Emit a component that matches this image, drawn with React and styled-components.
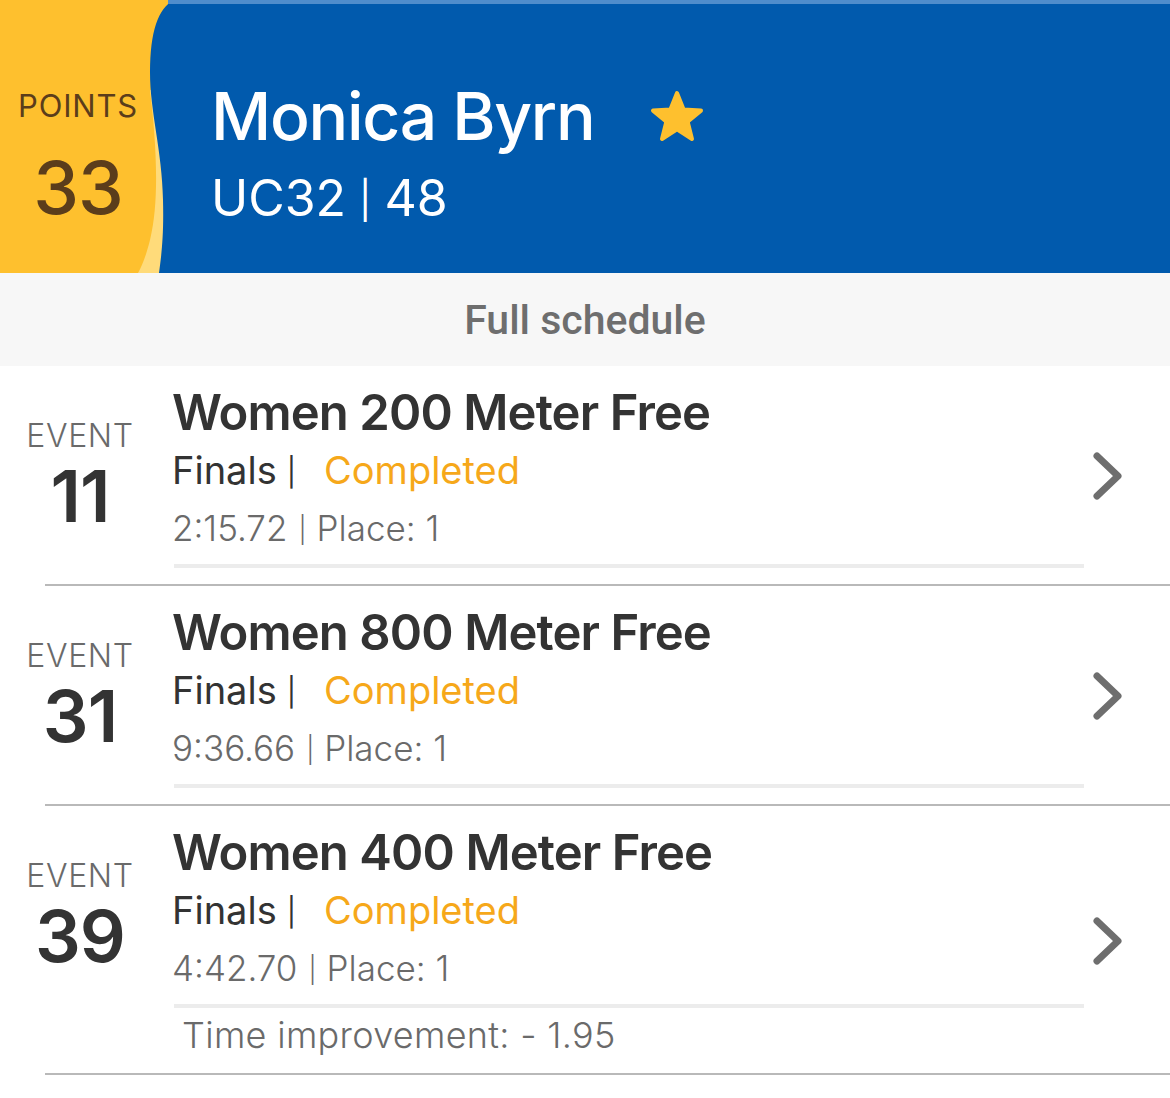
import React from "react";
import styled, { createGlobalStyle } from "styled-components";

const Global = createGlobalStyle`
  html, body { margin: 0; padding: 0; background: #ffffff; }
  body { font-family: "Inter", "Lato", sans-serif; -webkit-font-smoothing: antialiased; }
  * { box-sizing: border-box; }
`;

const Page = styled.div`
  width: 1170px;
  min-height: 1098px;
  background: #ffffff;
  overflow: hidden;
`;

const Header = styled.header`
  position: relative;
  display: flex;
  align-items: stretch;
  height: 273px;
  background: #fec02e;
`;

const Wave = styled.svg`
  position: absolute;
  inset: 0;
  width: 100%;
  height: 100%;
  display: block;
`;

const PointsBox = styled.div`
  position: relative;
  width: 156px;
  display: flex;
  flex-direction: column;
  align-items: center;
  padding-top: 88px;
  color: #5b3d1b;
`;

const PointsLabel = styled.div`
  font-size: 31px;
  line-height: 36px;
  font-weight: 400;
  letter-spacing: 0.8px;
`;

const PointsValue = styled.div`
  font-size: 73px;
  line-height: 80px;
  font-weight: 500;
  margin-top: 24px;
  letter-spacing: -1px;
`;

const Athlete = styled.div`
  position: relative;
  display: flex;
  flex-direction: column;
  padding-left: 55px;
  padding-top: 76px;
  color: #ffffff;
`;

const NameRow = styled.div`
  display: flex;
  align-items: center;
  gap: 55px;
`;

const Name = styled.h1`
  margin: 0;
  font-size: 66px;
  line-height: 80px;
  font-weight: 500;
  letter-spacing: -1.3px;
`;

const Sub = styled.div`
  font-size: 50px;
  line-height: 60px;
  font-weight: 400;
  margin-top: 12px;
`;

const Pipe = styled.span`
  font-size: 0.74em;
  vertical-align: ${(p) => p.$lift || "2px"};
  margin: 0 ${(p) => p.$right || p.$left || "12px"} 0 ${(p) => p.$left || "12px"};
`;

const ScheduleBar = styled.div`
  height: 93px;
  background: #f7f7f7;
  display: flex;
  align-items: center;
  justify-content: center;
  font-family: "Roboto", "Liberation Sans", sans-serif;
  font-weight: 500;
  font-size: 41px;
  color: #6e6e6e;
  padding-top: 1px;
`;

const List = styled.div`
  display: flex;
  flex-direction: column;
`;

const Row = styled.div`
  display: flex;
  align-items: center;
  padding: 18px 0 16px;
`;

const Main = styled.div`
  flex: 0 0 1084px;
  display: flex;
  flex-direction: column;
`;

const Top = styled.div`
  display: flex;
  align-items: center;
`;

const EventCol = styled.div`
  flex: 0 0 172px;
  padding-right: 12px;
  display: flex;
  flex-direction: column;
  align-items: center;
`;

const EventLabel = styled.div`
  font-size: 32px;
  line-height: 36px;
  font-weight: 300;
  color: #6a6a6a;
  letter-spacing: 0.6px;
`;

const EventNum = styled.div`
  font-size: 72px;
  line-height: 76px;
  font-weight: 600;
  color: #333333;
  margin-top: 4px;
  letter-spacing: -1px;
`;

const Info = styled.div`
  flex: 1;
  display: flex;
  flex-direction: column;
`;

const Title = styled.div`
  font-size: 49px;
  line-height: 58px;
  font-weight: 600;
  color: #333333;
  letter-spacing: -0.9px;
`;

const Meta = styled.div`
  font-size: 38px;
  line-height: 56px;
  font-weight: 400;
  color: #333333;
`;

const Status = styled.span`
  color: #f6a81a;
`;

const Result = styled.div`
  font-size: 35px;
  line-height: 56px;
  font-weight: 300;
  color: #6a6a6a;
`;

const Rule = styled.div`
  height: 4px;
  background: #ececec;
  margin-top: 6px;
  margin-left: 2px;
`;

const Footer = styled.div`
  padding: 5px 0 0 182px;
  font-size: 36px;
  line-height: 44px;
  font-weight: 300;
  color: #6a6a6a;
  letter-spacing: 0.3px;
`;

const ChevronCell = styled.div`
  flex: 1;
  display: flex;
  align-items: center;
  padding-left: 9px;
`;

const Separator = styled.div`
  height: 2px;
  background: #b9b9b9;
  margin-left: 45px;
`;

const Star = () => (
  <svg width="56" height="52" viewBox="0 0 56 52" aria-hidden="true">
    <path
      d="M28 3 L34.6 19.6 L52 20.6 L38.6 31.6 L43 49 L28 39.3 L13 49 L17.4 31.6 L4 20.6 L21.4 19.6 Z"
      fill="#fec02e"
      stroke="#fec02e"
      strokeWidth="4"
      strokeLinejoin="round"
    />
  </svg>
);

const Chevron = () => (
  <svg width="30" height="48" viewBox="0 0 30 48" aria-hidden="true">
    <polyline
      points="4,4 25,24 4,44"
      fill="none"
      stroke="#6e6e6e"
      strokeWidth="7"
      strokeLinecap="round"
      strokeLinejoin="round"
    />
  </svg>
);

const events = [
  { num: "11", title: "Women 200 Meter Free", time: "2:15.72", place: "1" },
  { num: "31", title: "Women 800 Meter Free", time: "9:36.66", place: "1" },
  { num: "39", title: "Women 400 Meter Free", time: "4:42.70", place: "1", improvement: "- 1.95" },
];

export default function App() {
  return (
    <Page>
      <Global />
      <Header>
        <Wave viewBox="0 0 1170 273" preserveAspectRatio="none" aria-hidden="true">
          <path d="M150,90 C156,140 160,200 150,240 C146,256 142,266 138,273 L220,273 L220,90 Z" fill="#ffdb7a" />
          <path
            d="M174,0 C158,8 150,32 150,72 C150,112 162,150 163,200 C164,238 161,258 159,273 L1170,273 L1170,0 Z"
            fill="#015aad"
          />
          <path d="M168,2 L1170,2" stroke="#4f8dcc" strokeWidth="4" />
        </Wave>
        <PointsBox>
          <PointsLabel>POINTS</PointsLabel>
          <PointsValue>33</PointsValue>
        </PointsBox>
        <Athlete>
          <NameRow>
            <Name>Monica Byrn</Name>
            <Star />
          </NameRow>
          <Sub>
            UC32<Pipe $lift="3px" $left="13px" $right="13px">|</Pipe>48
          </Sub>
        </Athlete>
      </Header>
      <ScheduleBar>Full schedule</ScheduleBar>
      <List>
        {events.map((e) => (
          <React.Fragment key={e.num}>
            <Row>
              <Main>
                <Top>
                  <EventCol>
                    <EventLabel>EVENT</EventLabel>
                    <EventNum>{e.num}</EventNum>
                  </EventCol>
                  <Info>
                    <Title>{e.title}</Title>
                    <Meta>
                      Finals<Pipe $left="10px" $right="28px">|</Pipe>
                      <Status>Completed</Status>
                    </Meta>
                    <Result>
                      {e.time}
                      <Pipe $left="11px" $right="10px">|</Pipe>Place: {e.place}
                    </Result>
                    <Rule />
                  </Info>
                </Top>
                {e.improvement && <Footer>Time improvement: {e.improvement}</Footer>}
              </Main>
              <ChevronCell>
                <Chevron />
              </ChevronCell>
            </Row>
            <Separator />
          </React.Fragment>
        ))}
      </List>
    </Page>
  );
}
